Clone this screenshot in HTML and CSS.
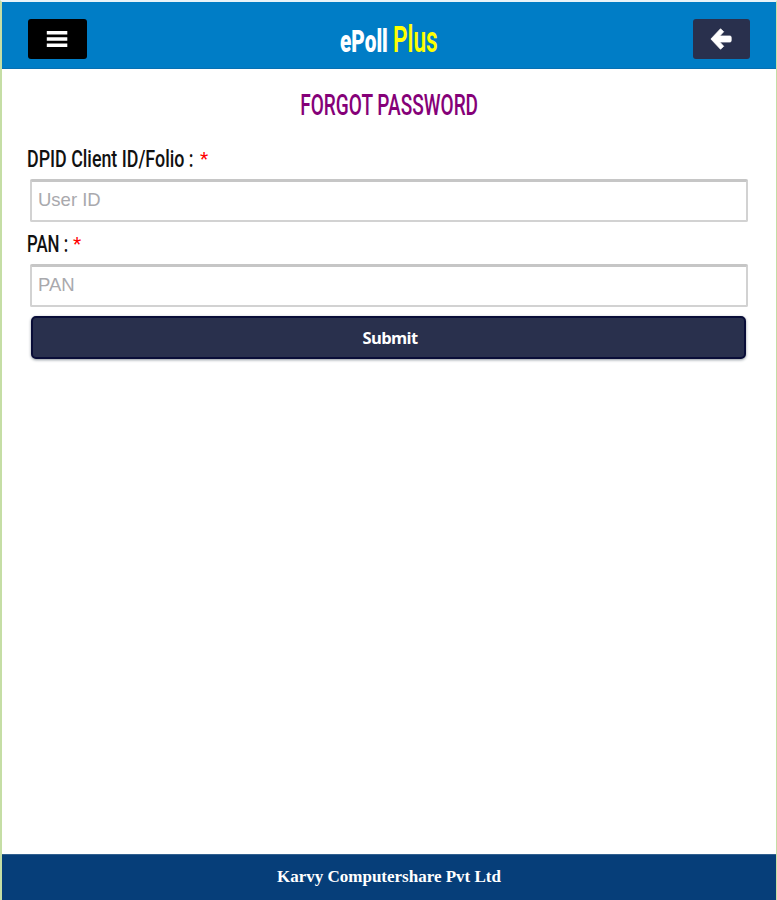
FILE: index.html
```html
<!DOCTYPE html>
<html lang="en">
<head>
  <meta charset="UTF-8" />
  <meta name="viewport" content="width=device-width, initial-scale=1.0" />
  <title>ePoll Plus - Forgot Password</title>
  <link rel="stylesheet" href="styles.css">
</head>
<body>

  <header class="header">
    <button type="button" class="nav-btn menu-btn" aria-label="Menu">
      <svg width="22" height="18" viewBox="0 0 22 18"><path d="M.8 1h20.5v3.4H.8zM.8 7.3h20.5v3.4H.8zM.8 13.6h20.5V17H.8z" fill="#fff"/></svg>
    </button>
    <h1 class="logo"><span class="logo-main">ePoll</span><span class="logo-plus">Plus</span></h1>
    <button type="button" class="nav-btn back-btn" aria-label="Back">
      <svg width="22" height="22" viewBox="0 0 22 22"><path d="M10.5 0.8L0.9 11l9.6 10.2 3.2-2.9-4-4.3h10.2q1.3 0 1.3-1.3V9.3q0-1.3-1.3-1.3H9.7l4-4.3z" fill="#fff" stroke="#fff" stroke-width=".8" stroke-linejoin="round"/></svg>
    </button>
  </header>

  <main class="content">
    <h2 class="title"><span>FORGOT PASSWORD</span></h2>

    <form>
      <label for="userid"><span class="label-text">DPID Client ID/Folio :</span><span class="required">*</span></label>
      <input type="text" id="userid" placeholder="User ID" />

      <label for="pan" class="pan-label"><span class="label-text">PAN :</span><span class="required">*</span></label>
      <input type="text" id="pan" placeholder="PAN" />

      <button type="button" class="submit">Submit</button>
    </form>
  </main>

  <footer class="footer">Karvy Computershare Pvt Ltd</footer>

</body>
</html>
```
FILE: styles.css
```css
* {
  box-sizing: border-box;
}

body {
  margin: 0;
  height: 900px;
  display: flex;
  flex-direction: column;
  border-left: 2px solid #c5dea5;
  border-right: 1px solid #c5dea5;
  border-top: 2px solid #e9f3f8;
  background: #fff;
  font-family: Roboto, sans-serif;
}

.header {
  height: 67px;
  padding: 8px 26px 0;
  display: flex;
  align-items: center;
  justify-content: space-between;
  background: #007dc6;
  border-bottom: 1px solid #0870b2;
}

.nav-btn {
  height: 40px;
  padding: 0;
  display: flex;
  align-items: center;
  justify-content: center;
  border: 0;
  border-radius: 3px;
}

.menu-btn {
  width: 59px;
  background: #000;
}

.menu-btn svg {
  margin: -1px 1px 0 0;
}

.back-btn {
  width: 57px;
  background: #29304d;
}

.back-btn svg {
  margin-right: 2px;
}

.logo {
  margin: 4px 0 0;
  width: 101px;
  display: flex;
  align-items: baseline;
  white-space: nowrap;
  line-height: 40px;
}

.logo span {
  transform-origin: left;
}

.logo-main {
  width: 53px;
  font-size: 31px;
  font-weight: 900;
  color: #fff;
  transform: scaleX(0.67);
}

.logo-plus {
  width: 47px;
  font-size: 36px;
  font-weight: 600;
  color: #ff0;
  transform: scaleX(0.63);
}

.content {
  flex: 1;
  padding: 14px 28px 0 25px;
}

.title {
  margin: 0;
  height: 42px;
  padding-left: 3px;
  display: flex;
  justify-content: center;
  font-size: 30px;
  font-weight: 500;
  line-height: 43px;
  color: #850078;
  white-space: nowrap;
}

.title span {
  transform: scaleX(0.635);
}

label {
  margin-top: 19px;
  height: 35px;
  display: flex;
  line-height: 31px;
  color: #111;
  white-space: nowrap;
}

.label-text {
  width: 173px;
  font-size: 24px;
  font-weight: 500;
  transform: scaleX(0.743);
  transform-origin: left;
}

.pan-label {
  margin-top: 7px;
}

.pan-label .label-text {
  width: 46px;
  transform: scaleX(0.7);
}

.required {
  font-size: 19px;
  line-height: 29px;
  color: #f00;
}

input {
  display: block;
  width: 718px;
  height: 43px;
  margin: 0 0 0 3px;
  padding: 0 6px 2px;
  border: 2px solid #d2d2d2;
  border-top: 3px solid #c6c6c6;
  border-radius: 2px;
  font-family: "Liberation Sans", sans-serif;
  font-size: 18.5px;
}

input::placeholder {
  color: #a9a9ad;
}

.submit {
  display: block;
  width: 715px;
  height: 43px;
  margin: 9px 0 0 4px;
  padding: 0 0 1px 3px;
  border: 2px solid #090d38;
  border-radius: 5px;
  background: #29304d;
  box-shadow: 0 1px 3px #8b949b;
  font-family: "Open Sans", sans-serif;
  font-size: 16.5px;
  font-weight: 700;
  letter-spacing: -0.6px;
  color: #fff;
}

.footer {
  height: 46px;
  background: #063e79;
  border-top: 1px solid #31608f;
  font-family: "Liberation Serif", serif;
  font-size: 17px;
  font-weight: 700;
  line-height: 44px;
  text-align: center;
  color: #fff;
}
```
